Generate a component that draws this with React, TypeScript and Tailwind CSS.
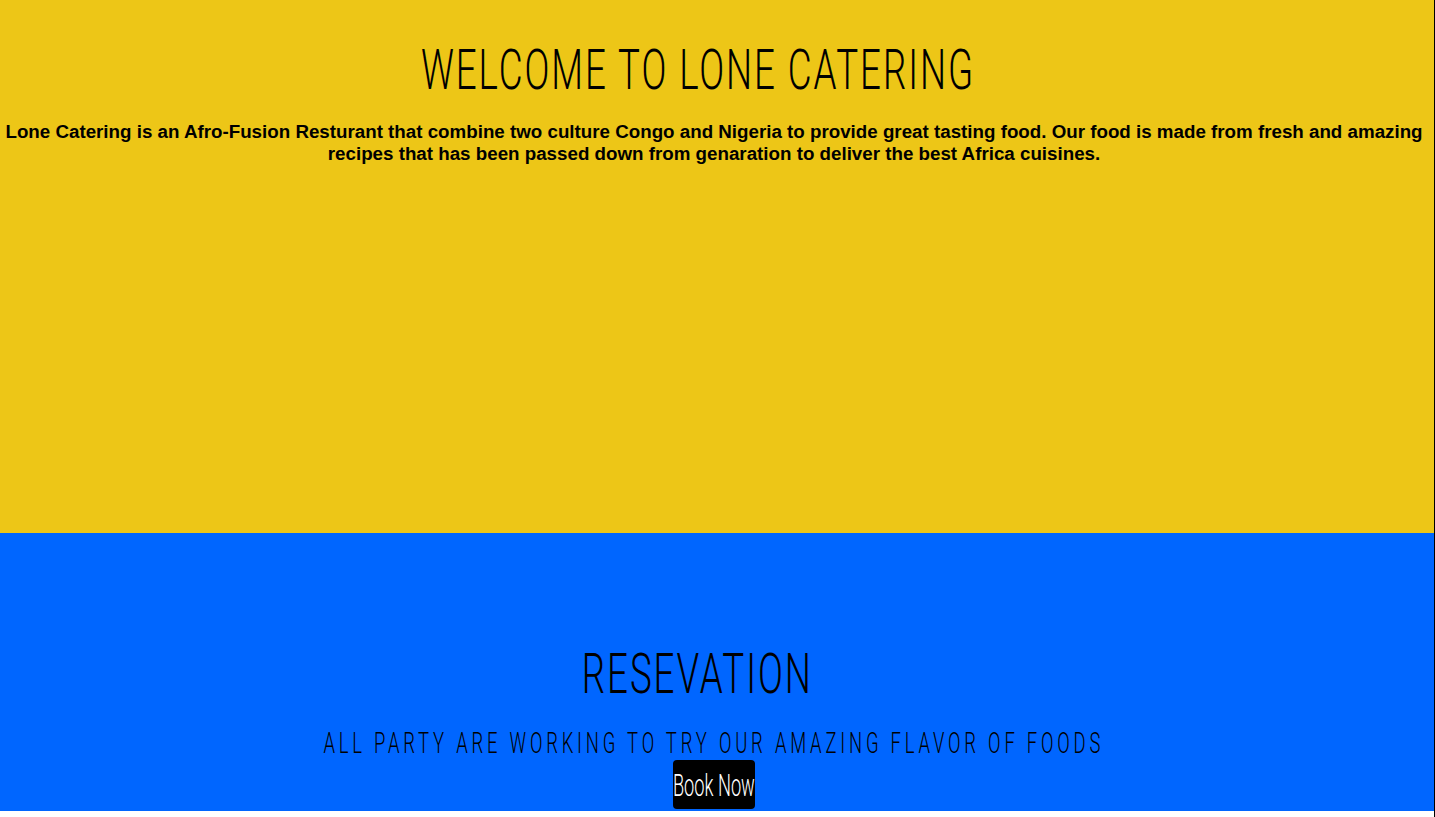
import React from 'react'

const oswald = { fontFamily: 'Roboto, "Liberation Sans", sans-serif' }

function App() {
    return (
        <div className='w-full min-h-[817px] bg-white flex'>
            <div className='w-[1434px] flex flex-col'>
                <section className='h-[533px] pr-[6px] bg-[#edc617] flex flex-col items-center'>
                    <h1 style={oswald} className='mt-[42px] mr-[33px] text-[56px] leading-none font-light text-black tracking-[3px] scale-x-[0.655] whitespace-nowrap'>
                        WELCOME TO LONE CATERING
                    </h1>
                    <p className='mt-[23px] text-center text-[18.75px] leading-[22px] font-bold text-black font-["Liberation_Sans",Arial,sans-serif]'>
                        Lone Catering is an Afro-Fusion Resturant that combine two culture Congo and Nigeria to provide great tasting food. Our food is made from fresh and amazing recipes that has been passed down from genaration to deliver the best Africa cuisines.
                    </p>
                </section>
                <section className='h-[278px] pr-[6px] bg-[#0066ff] flex flex-col items-center'>
                    <h2 style={oswald} className='mt-[113px] mr-[33px] text-[56px] leading-none font-light text-black tracking-[3px] scale-x-[0.655] whitespace-nowrap'>
                        RESEVATION
                    </h2>
                    <p style={oswald} className='mt-[27px] text-[29px] leading-none font-light text-black tracking-[6px] scale-x-[0.635] whitespace-nowrap'>
                        ALL PARTY ARE WORKING TO TRY OUR AMAZING FLAVOR OF FOODS
                    </p>
                    <button className='mt-[2px] w-[82px] h-[49px] bg-black rounded-[4px] flex items-center justify-center'>
                        <span style={oswald} className='text-[32px] leading-none font-light text-white scale-x-[0.57] whitespace-nowrap'>Book Now</span>
                    </button>
                </section>
            </div>
            <div className='w-px bg-black' />
        </div>
    )
}

export default App
